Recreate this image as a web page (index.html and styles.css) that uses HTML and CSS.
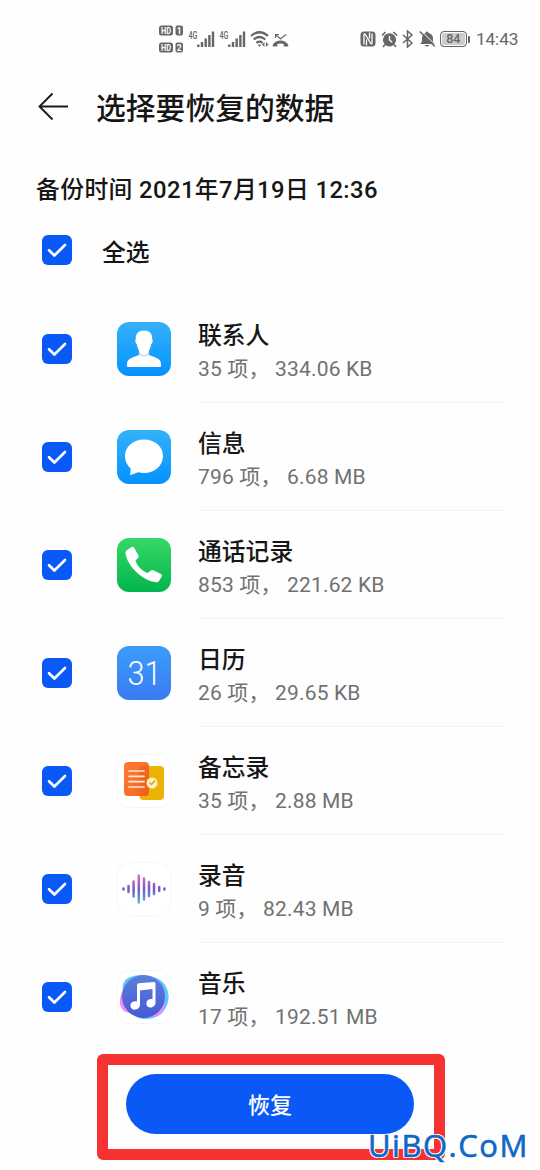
FILE: index.html
```html
<!DOCTYPE html>
<html lang="zh-CN">
<head>
<meta charset="utf-8">
<meta name="viewport" content="width=device-width">
<title>选择要恢复的数据</title>
<link rel="stylesheet" href="styles.css">
</head>
<body>
<svg class="defs" width="0" height="0" aria-hidden="true">
  <defs>
    <symbol id="check" viewBox="0 0 30 30"><path d="M7 15.2l5.4 5.3L23 10" fill="none" stroke="#fff" stroke-width="2.6" stroke-linecap="round" stroke-linejoin="round"/></symbol>
    <symbol id="signal" viewBox="0 0 28 20"><text x="0.500" y="10" font-size="10.500" font-weight="500" textLength="9" lengthAdjust="spacingAndGlyphs">4G</text><path d="M10.300 15.500v2.500M14 13v5M17.700 9.500v8.500M21.400 6v12M25 2.500v15.500" fill="none" stroke="#666" stroke-width="2.400"/></symbol>
    <linearGradient id="blue" x1="0" y1="0" x2="0" y2="1"><stop stop-color="#35b1fb"/><stop offset="1" stop-color="#0592fe"/></linearGradient>
    <linearGradient id="green" x1="0" y1="0" x2="0" y2="1"><stop stop-color="#37d867"/><stop offset="1" stop-color="#02b54d"/></linearGradient>
    <linearGradient id="cal" x1="0" y1="0" x2="0" y2="1"><stop stop-color="#3b9cfb"/><stop offset="1" stop-color="#397bf2"/></linearGradient>
    <linearGradient id="orange" x1="0" y1="0" x2="1" y2="1"><stop stop-color="#ff7a36"/><stop offset="1" stop-color="#f4671d"/></linearGradient>
    <linearGradient id="wave" gradientUnits="userSpaceOnUse" x1="0" y1="12" x2="0" y2="42"><stop stop-color="#ee70b5"/><stop offset=".5" stop-color="#7658bd"/><stop offset="1" stop-color="#59b5ee"/></linearGradient>
    <linearGradient id="disc" x1="0" y1="0" x2="0" y2="1"><stop stop-color="#5c80d9"/><stop offset="1" stop-color="#4858d7"/></linearGradient>
  </defs>
</svg>
<div class="screen">
  <header class="status">
    <svg class="hd" width="26" height="30" viewBox="0 0 26 30"><g fill="#666"><rect x="1" y="1.500" width="14" height="10" rx="2.500"/><rect x="17.500" y="1.500" width="7.500" height="10" rx="2"/><rect x="1" y="18.500" width="14" height="10" rx="2.500"/><rect x="17.500" y="18.500" width="7.500" height="10" rx="2"/></g><g class="hd-text"><text x="3" y="9.500" textLength="10" lengthAdjust="spacingAndGlyphs">HD</text><text x="18.700" y="9.500">1</text><text x="3" y="26.500" textLength="10" lengthAdjust="spacingAndGlyphs">HD</text><text x="18.700" y="26.500">2</text></g></svg>
    <svg class="signal" width="28" height="20"><use href="#signal"/></svg>
    <svg class="signal second" width="28" height="20"><use href="#signal"/></svg>
    <svg class="wifi" width="20" height="18" viewBox="0 0 20 18" fill="none" stroke="#666" stroke-width="2.200"><path d="M1 6Q9.500-1.500 18 6M3.700 9.500q5.800-5 11.600 0M6.400 12.800q3.100-2.400 6.200 0"/><path d="M7.800 14.500h3.400L9.500 17zM14.500 12v5L12 14.500zM16 12v5l2.500-2.500z" fill="#666" stroke="none"/></svg>
    <svg class="missed" width="17" height="15" viewBox="0 0 17 15"><path d="M.800 13.500V11.500C4.500 6.300 12.500 6.300 16.200 11.500V13.500H11.700V11Q8.500 9.800 5.300 11V13.500z" fill="#666"/><path d="M3.500 5V1.500H7M4 2l4.500 4L14 1.500" fill="none" stroke="#666" stroke-width="1.200"/></svg>
    <svg class="nfc" width="16" height="16" viewBox="0 0 16 16"><rect x=".500" y=".500" width="15" height="15" rx="3.500" fill="#666"/><path d="M4 13.500v-10q0-1 1.200-.3l5.600 9.300q1.200.8 1.200-.5V2.500M6.500 8.500v6M9.500 7.500v-6" fill="none" stroke="#fff" stroke-width="1.300"/></svg>
    <svg class="alarm" width="17" height="17" viewBox="0 0 17 17"><circle cx="8.500" cy="8.800" r="6.600" fill="#666"/><path d="M1 4.500L4.500 1M12.500 1L16 4.500M4 13.500l-2 2.500M13 13.500l2 2.500" stroke="#666" stroke-width="1.700"/><path d="M8.500 5v4l2.700 2.200" fill="none" stroke="#fff" stroke-width="1.400"/></svg>
    <svg class="bt" width="12" height="18" viewBox="0 0 12 18"><path d="M1 5l9 8-4.500 4V1L10 5l-9 8" fill="none" stroke="#666" stroke-width="1.500"/></svg>
    <svg class="bell" width="17" height="18" viewBox="0 0 17 18"><path d="M8 1.500q1.500 0 1.500 1.500Q14 4 14 8.500v3l2 2.500H1l2-2.500v-3q0-4.500 3.500-5.500Q6.500 1.500 8 1.500zM5.500 15h5q-2.500 3-5 0z" fill="#666"/><path d="M2.500 1L17 15.500" stroke="#fff" stroke-width="1"/><path d="M.800 1.500l15 15" stroke="#666" stroke-width="1.600"/></svg>
    <span class="battery"><span class="level">84</span><span class="nub"></span></span>
    <span class="clock">14:43</span>
  </header>

  <div class="titlebar">
    <svg width="32" height="30" viewBox="0 0 32 30"><path d="M31 14.500H3M15.500 1.500L2.500 14.500l13 13" fill="none" stroke="#1b1b1b" stroke-width="1.900"/></svg>
    <h1>选择要恢复的数据</h1>
  </div>
  <p class="backup-time">备份时间 2021年7月19日 12:36</p>
  <div class="all"><svg class="box"><use href="#check"/></svg><span>全选</span></div>

  <main class="list">
    <div class="row"><svg class="box"><use href="#check"/></svg>
      <svg class="app" viewBox="0 0 54 54"><rect width="54" height="54" rx="12" fill="url(#blue)"/><path d="M22 28h10v8q-5 3-10 0z" fill="#cfddf9"/><path d="M27 8.500c6.500 0 8.500 4 8.300 9.300.8.700.4 3-1 4.200-.7 4.500-3.800 11-7.300 11s-6.600-6.500-7.300-11c-1.400-1.200-1.800-3.500-1-4.200-.2-5.300 1.800-9.300 8.300-9.300z" fill="#fff"/><path d="M10 44v-2c0-5 5-6.500 12-9q5 3.500 10 0c7 2.500 12 4 12 9v2q0 1-1 1H11q-1 0-1-1z" fill="#fff"/></svg>
      <div class="info"><h2>联系人</h2><p>35 项， 334.06 KB</p></div></div>
    <div class="row"><svg class="box"><use href="#check"/></svg>
      <svg class="app" viewBox="0 0 54 54"><rect width="54" height="54" rx="12" fill="url(#blue)"/><path d="M27 9.500C16.500 9.500 8 16.500 8 26c0 5.500 2.500 9.500 5.500 12.200.2 2.300 0 4.500-.5 6.800 3-.4 5.500-1.700 8-2.700 2 .500 4 .700 6 .700 10.500 0 19-7.300 19-17S37.500 9.500 27 9.500z" fill="#fff"/></svg>
      <div class="info"><h2>信息</h2><p>796 项， 6.68 MB</p></div></div>
    <div class="row"><svg class="box"><use href="#check"/></svg>
      <svg class="app" viewBox="0 0 54 54"><rect width="54" height="54" rx="12" fill="url(#green)"/><path d="M9.500 12.500l5-3.500q1.500-.8 2.500.5l4.500 8q.6 1.400-.5 2.500l-2.500 2.500c1.200 5 6 10 12 12.500l3.500-2.500q1.200-.800 2.500-.2l7.500 3.700q1.500.800.7 2.500l-2.700 4.500q-.8 1.500-2.500 1.300C25.500 42.800 10 28 8.500 15q-.2-1.600 1-2.500z" fill="#fff"/></svg>
      <div class="info"><h2>通话记录</h2><p>853 项， 221.62 KB</p></div></div>
    <div class="row"><svg class="box"><use href="#check"/></svg>
      <svg class="app" viewBox="0 0 54 54"><rect width="54" height="54" rx="12" fill="url(#cal)"/><text class="date" x="10.500" y="39" textLength="34" lengthAdjust="spacingAndGlyphs">31</text></svg>
      <div class="info"><h2>日历</h2><p>26 项， 29.65 KB</p></div></div>
    <div class="row"><svg class="box"><use href="#check"/></svg>
      <svg class="app" viewBox="0 0 54 54"><rect class="plate" x=".5" y=".5" width="53" height="53" rx="12"/><rect x="22.500" y="12" width="24.500" height="34" rx="4" fill="#ecb306"/><rect x="7" y="8" width="25" height="34" rx="4" fill="url(#orange)"/><path d="M22.500 42V16q0-4 4-4H32v26q0 4-4 4z" fill="#e75b18" opacity=".45"/><circle cx="35" cy="29" r="5.500" fill="#fff0bd"/><path d="M32.500 28.500l2 2 3.500-4" fill="none" stroke="#dda229" stroke-width="1.500"/><path d="M12 17h15M12 22.300h15M12 27.600h15M12 33h15" stroke="#ffe8d8" stroke-width="1.700" stroke-linecap="round"/></svg>
      <div class="info"><h2>备忘录</h2><p>35 项， 2.88 MB</p></div></div>
    <div class="row"><svg class="box"><use href="#check"/></svg>
      <svg class="app" viewBox="0 0 54 54"><rect class="plate" x=".5" y=".5" width="53" height="53" rx="12"/><path d="M6.500 26.500v1M11.500 24v6M16.600 19.500v15M21.800 13.500v27M27 16.500v21M32 20v14M37 22v10M42.200 25v4M47.400 26.500v1" fill="none" stroke="url(#wave)" stroke-width="2.500" stroke-linecap="round"/></svg>
      <div class="info"><h2>录音</h2><p>9 项， 82.43 MB</p></div></div>
    <div class="row"><svg class="box"><use href="#check"/></svg>
      <svg class="app" viewBox="0 0 54 54"><rect class="plate" x=".5" y=".5" width="53" height="53" rx="12"/><path d="M7 17C2 27 1 36 7 41c5 3 20 5 31 5 8 0 12-10 9-20z" fill="#f18cec"/><path d="M11 8C22 2 42 5 48 15c6 10 4 19-2 27-6 7-19 9-26 5C13 43 8 35 6 21 5 15 7 10 11 8z" fill="#63c4fb"/><path d="M47 29q2 8-3 14-3 4-9 3z" fill="#f18cec"/><circle cx="26.500" cy="26.500" r="21.500" fill="url(#disc)"/><path d="M20 15.200q0-1.500 1.500-2L37 12q1.500 0 1.500 1.500v19c0 2.800-2.200 5-5 5-5.500 0-5.500-8 0-8.500 1 0 1.500.2 2 .3V19l-12.500 1.500v14c0 3-2.300 5.200-5.500 5.200-5.500 0-5.500-8.300.5-8.400 1 0 1.500.1 2 .3z" fill="#fff"/></svg>
      <div class="info"><h2>音乐</h2><p>17 项， 192.51 MB</p></div></div>
  </main>

  <footer class="action"><button type="button">恢复</button></footer>
  <span class="watermark">UiBQ.CoM</span>
</div>
</body>
</html>
```

FILE: styles.css
```css
* { box-sizing: border-box; }
body { margin: 0; background: #fff; color: #161616; font-family: Roboto, "Noto Sans CJK SC", sans-serif; }
h1, h2, p { margin: 0; font-weight: 500; white-space: nowrap; }
svg { flex: none; display: block; }
.defs { position: absolute; }
.screen { position: relative; width: 540px; height: 1170px; overflow: hidden; background: #fefefe; display: flex; flex-direction: column; }

.status { height: 78px; padding: 0 22px 0 158px; display: flex; align-items: center; color: #666; font-family: Roboto, sans-serif; }
.signal { fill: #666; margin-left: 4px; }
.signal.second { margin-left: 3px; }
.hd-text { fill: #fff; font-size: 8.500px; font-weight: 700; }
.wifi { margin-left: 3px; }
.missed { margin: 3px 0 0 2px; }
.nfc { margin-left: 71px; }
.alarm { margin-left: 5px; }
.bt { margin-left: 4px; }
.bell { margin-left: 5px; }
.battery { width: 30px; margin-left: 4px; flex: none; display: flex; align-items: center; gap: 1.5px; }
.level { width: 26.5px; height: 16px; border: 1.5px solid #666; border-radius: 4px; background: #ccc; box-shadow: inset 0 0 0 1px #fefefe; font-size: 12.5px; font-weight: 500; line-height: 14px; text-align: center; }
.nub { width: 2px; height: 7px; border-radius: 1px; background: #666; }
.clock { margin-left: 6px; font-size: 17.2px; line-height: 20px; letter-spacing: -.1px; }

.titlebar { height: 60px; display: flex; align-items: center; gap: 27px; padding: 0 0 2px 37px; }
h1 { font-size: 29.8px; line-height: 44px; padding-top: 3px; }
.backup-time { height: 40px; margin-top: 32px; padding-left: 36px; font-size: 23.8px; font-weight: 500; line-height: 40px; letter-spacing: .4px; }
.all { height: 60px; margin-top: 10px; padding-left: 42px; display: flex; align-items: center; gap: 30px; font-size: 23.8px; font-weight: 500; }
.box { width: 30px; height: 30px; border-radius: 6px; background: #0a59f7; }
.list { margin-top: 15px; }
.row { height: 108px; padding: 0 36px 0 42px; display: flex; align-items: center; }
.app { width: 54px; height: 54px; margin-left: 45px; overflow: visible; }
.plate { fill: #fff; stroke: #f6f6f7; }
.date { font: 300 34px Roboto, sans-serif; fill: #fff; }
.info { align-self: stretch; flex: 1; margin-left: 28px; padding-top: 23px; border-bottom: 1px solid #f4f4f4; }
.info h2 { font-size: 23.8px; line-height: 36px; margin-left: -1px; }
.info p { font-size: 21px; font-weight: 400; line-height: 30px; color: #717171; margin-left: -1px; letter-spacing: .17px; }
.row:last-child .info { border: 0; }

.action { width: 348px; height: 106px; margin: 3px 0 0 97px; padding: 9px 18px 0; border: 11px solid #f53333; border-radius: 6px; flex: none; }
.action button { display: block; width: 288px; height: 60px; padding: 0 0 2px; border: 0; border-radius: 30px; background: #0a59f7; color: #fff; font: 500 22px Roboto, "Noto Sans CJK SC", sans-serif; }
.watermark { position: absolute; left: 368px; top: 1126px; font: 500 31px/38px "Open Sans", sans-serif; color: #0f68c6; letter-spacing: 1.5px; -webkit-text-stroke: .6px #0f68c6; text-shadow: 1px 0 #fff, -1px 0 #fff, 0 1px #fff, 0 -1px #fff, 1px 1px #fff, -1px -1px #fff, 1px -1px #fff, -1px 1px #fff; }
```
